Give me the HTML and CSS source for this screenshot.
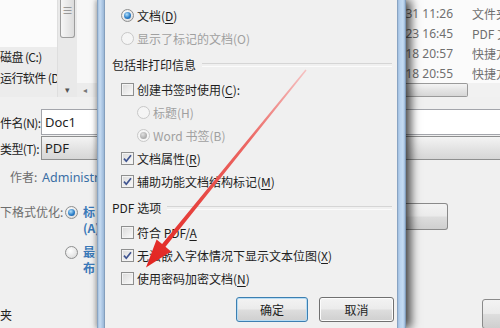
FILE: index.html
```html
<!DOCTYPE html>
<html lang="zh-CN">
<head>
    <meta charset="UTF-8">
    <meta name="viewport" content="width=device-width, initial-scale=1.0">
    <title>选项</title>
    <link rel="stylesheet" href="styles.css">
</head>
<body>
<div class="screen">
    <!-- 另存为 对话框左侧 -->
    <div class="side-left">
        <div class="nav">
            <div class="nav-list">
                <div class="nav-blank"></div>
                <div class="nav-item">磁盘 (C:)</div>
                <div class="nav-item">运行软件 (D</div>
            </div>
            <div class="vscroll">
                <div class="vthumb">≡</div>
                <div class="vtrack"></div>
                <div class="varrow">▾</div>
            </div>
            <div class="nav-edge">
                <div class="nav-edge-top"></div>
                <div class="harrow">◂</div>
            </div>
        </div>
        <div class="field">
            <span class="field-label">件名(N):</span>
            <div class="textbox">Doc1</div>
        </div>
        <div class="field">
            <span class="field-label">类型(T):</span>
            <div class="combo">PDF</div>
        </div>
        <div class="meta">
            <span class="meta-label">作者:</span>
            <span class="meta-value">Administr</span>
        </div>
        <div class="optimize">
            <span class="opt-label">下格式优化:</span>
            <span class="rb checked"></span>
            <span class="opt-text">标<br>(A)</span>
            <span></span>
            <span class="rb"></span>
            <span class="opt-text">最<br>布</span>
        </div>
        <div class="folder">夹</div>
    </div>

    <!-- 选项 对话框 -->
    <div class="dialog">
        <div class="frame frame-left"></div>
        <div class="dialog-body">
            <div class="opt"><span class="rb checked"></span><span>文档(<u>D</u>)</span></div>
            <div class="opt disabled"><span class="rb"></span><span>显示了标记的文档(O)</span></div>
            <div class="group-title"><span>包括非打印信息</span></div>
            <div class="opt"><span class="cb"></span><span>创建书签时使用(<u>C</u>):</span></div>
            <div class="opt sub disabled"><span class="rb"></span><span>标题(H)</span></div>
            <div class="opt sub disabled"><span class="rb dot"></span><span>Word 书签(B)</span></div>
            <div class="opt">
                <span class="cb"><svg viewBox="0 0 11 11"><path d="M2 5.6l2.3 2.6L9 2.2"/></svg></span>
                <span>文档属性(<u>R</u>)</span>
            </div>
            <div class="opt">
                <span class="cb"><svg viewBox="0 0 11 11"><path d="M2 5.6l2.3 2.6L9 2.2"/></svg></span>
                <span>辅助功能文档结构标记(<u>M</u>)</span>
            </div>
            <div class="group-title"><span>PDF 选项</span></div>
            <div class="opt"><span class="cb"></span><span>符合 PDF/<u>A</u></span></div>
            <div class="opt">
                <span class="cb"><svg viewBox="0 0 11 11"><path d="M2 5.6l2.3 2.6L9 2.2"/></svg></span>
                <span>无法嵌入字体情况下显示文本位图(<u>X</u>)</span>
            </div>
            <div class="opt"><span class="cb"></span><span>使用密码加密文档(<u>N</u>)</span></div>
            <div class="buttons">
                <button class="btn default">确定</button>
                <button class="btn">取消</button>
            </div>
        </div>
        <div class="frame frame-right"></div>
    </div>

    <!-- 另存为 对话框右侧 -->
    <div class="side-right">
        <div class="files">
            <div class="file-row"><span class="file-date">31 11:26</span><span class="file-type">文件夹</span></div>
            <div class="file-row"><span class="file-date">23 16:45</span><span class="file-type">PDF 文</span></div>
            <div class="file-row"><span class="file-date">18 20:57</span><span class="file-type">快捷方</span></div>
            <div class="file-row"><span class="file-date">18 20:55</span><span class="file-type">快捷方</span></div>
        </div>
        <div class="hscroll"><div class="hthumb"></div></div>
        <div class="textbox tail"></div>
        <div class="combo tail"></div>
        <div class="btn-stub"></div>
        <div class="btn-stub corner"></div>
    </div>

    <svg class="arrow" viewBox="0 0 500 328" width="500" height="328">
        <defs>
            <linearGradient id="red" x1="306" y1="70" x2="146" y2="267" gradientUnits="userSpaceOnUse">
                <stop offset="0" stop-color="#f5c2c2"/>
                <stop offset="0.35" stop-color="#ec6a66"/>
                <stop offset="1" stop-color="#e2231f"/>
            </linearGradient>
        </defs>
        <polygon fill="url(#red)" points="305.4,69.6 306.6,70.4 165.5,246.8 171,251.4 146,267.5 156.6,239.4 162.1,244"/>
    </svg>
</div>
</body>
</html>
```

FILE: styles.css
```css
* {
    box-sizing: border-box;
}

body {
    margin: 0;
    background-color: #f0f0f0;
    font-family: "Noto Sans CJK SC", "Noto Sans", sans-serif;
    font-size: 12px;
    color: #1e1e1e;
}

.screen {
    position: relative;
    width: 500px;
    height: 328px;
    display: flex;
    overflow: hidden;
    background-color: #f0f0f0;
}

/* 左侧 */
.side-left {
    width: 97px;
    flex: none;
    white-space: nowrap;
}

.nav {
    height: 97px;
    display: flex;
    background-color: #fbfbfb;
}

.nav-list {
    width: 57px;
    overflow: hidden;
}

.nav-blank {
    height: 47px;
}

.nav-item {
    height: 20px;
    line-height: 20px;
    background-color: #ececec;
    color: #222;
    letter-spacing: -0.6px;
}

.nav-item + .nav-item {
    height: 30px;
    line-height: 22px;
}

.vscroll {
    width: 20px;
    display: flex;
    flex-direction: column;
    background-color: #e9e9e9;
    border-left: 1px solid #dedede;
}

.vthumb {
    height: 38px;
    margin: 0 2px;
    padding-top: 3px;
    border: 1px solid #9d9d9d;
    border-top: none;
    border-radius: 0 0 3px 3px;
    background: linear-gradient(90deg, #f6f6f6, #dcdcdc);
    text-align: center;
    font-size: 11px;
    line-height: 14px;
    color: #8a8a8a;
}

.vtrack {
    flex: 1;
}

.varrow {
    height: 14px;
    text-align: center;
    font-size: 9px;
    line-height: 14px;
    color: #555;
}

.nav-edge {
    flex: 1;
    display: flex;
    flex-direction: column;
}

.nav-edge-top {
    flex: 1;
    background-color: #f7f7f7;
}

.harrow {
    height: 14px;
    padding-left: 6px;
    font-size: 8px;
    line-height: 14px;
    color: #777;
    background-color: #ececec;
}

.field {
    display: flex;
    align-items: center;
    margin-top: 12px;
}

.field + .field {
    margin-top: 1px;
}

.field-label {
    width: 41px;
    flex: none;
    color: #222;
    letter-spacing: -0.6px;
}

.textbox {
    flex: 1;
    height: 26px;
    line-height: 24px;
    padding-left: 3px;
    background-color: #fff;
    border: 1px solid #a3a5ab;
    border-right: none;
    font-family: "Noto Sans", sans-serif;
    font-size: 13px;
}

.combo {
    flex: 1;
    height: 24px;
    line-height: 22px;
    padding-left: 3px;
    background: linear-gradient(#f4f4f4, #e4e4e4 50%, #d6d6d6);
    border: 1px solid #8e8f8f;
    border-right: none;
    font-family: "Noto Sans", sans-serif;
    font-size: 13px;
}

.meta {
    margin-top: 7px;
    height: 20px;
    line-height: 20px;
    padding-left: 10px;
    overflow: hidden;
}

.meta-label {
    color: #6d6d6d;
}

.meta-value {
    margin-left: 2px;
    color: #3a6ea5;
    font-family: "Noto Sans", sans-serif;
    font-size: 12.5px;
}

.optimize {
    display: grid;
    grid-template-columns: 65px 18px 14px;
    row-gap: 8px;
    margin-top: 17px;
    line-height: 16px;
    overflow: hidden;
}

.opt-label {
    color: #6d6d6d;
}

.optimize .rb {
    margin-top: 2px;
}

.opt-text {
    color: #3b79b8;
    font-weight: bold;
}

.folder {
    margin-top: 29px;
    line-height: 20px;
    color: #222;
}

/* 对话框 */
.dialog {
    position: relative;
    z-index: 2;
    width: 309px;
    flex: none;
    display: flex;
    box-shadow: 5px 0 9px rgba(0, 0, 0, 0.7), -2px 0 4px rgba(0, 0, 0, 0.2);
}

.frame {
    flex: none;
}

.frame-left {
    width: 8px;
    background: linear-gradient(90deg, #6f88a6 0, #a5c1df 1px, #c6dbf1 3px, #afc9e6 5px, #9ab7d6 7px, #6d86a4 8px);
}

.frame-right {
    width: 9px;
    background: linear-gradient(90deg, #7088a6 0, #a0bedf 1px, #b8d2ee 3px, #c4dbf2 6px, #9bb8d8 8px, #667f9c 9px);
}

.dialog-body {
    flex: 1;
    padding: 4px 0 0 7px;
    background-color: #f0f0f0;
    white-space: nowrap;
}

.opt {
    display: flex;
    align-items: center;
    gap: 3px;
    height: 23px;
    padding-left: 9px;
}

.opt.sub {
    padding-left: 25px;
}

.opt.disabled {
    color: #a0a0a0;
}

.opt u {
    text-underline-offset: 2px;
}

.group-title {
    display: flex;
    align-items: center;
    height: 28px;
}

.group-title::after {
    content: "";
    flex: 1;
    height: 2px;
    margin: 1px 5px 0 6px;
    border-top: 1px solid #d5d5d5;
    border-bottom: 1px solid #fbfbfb;
}

.rb {
    position: relative;
    width: 13px;
    height: 13px;
    flex: none;
    border: 1px solid #8e8f8f;
    border-radius: 50%;
    background: radial-gradient(circle at 40% 35%, #ffffff, #e6e6e6 60%, #cfcfcf);
}

.rb.checked::after,
.rb.dot::after {
    content: "";
    position: absolute;
    inset: 2px;
    border-radius: 50%;
    background: radial-gradient(circle at 40% 35%, #b5e1fb, #2d7fc8 55%, #13559a);
}

.opt.disabled .rb {
    border-color: #c8c8c8;
    background: #f5f5f5;
}

.opt.disabled .rb.dot::after {
    background: radial-gradient(circle at 40% 35%, #e0e0e0, #b0b0b0 60%, #a0a0a0);
}

.cb {
    width: 13px;
    height: 13px;
    flex: none;
    display: flex;
    align-items: center;
    justify-content: center;
    border: 1px solid #8e8f8f;
    background: linear-gradient(135deg, #d9d9d9, #fbfbfb);
    box-shadow: inset 0 0 0 1px #f3f3f3;
}

.cb svg {
    width: 11px;
    height: 11px;
}

.cb path {
    fill: none;
    stroke: #3f5490;
    stroke-width: 1.7;
}

.buttons {
    display: flex;
    justify-content: flex-end;
    gap: 11px;
    margin-top: 7px;
    padding-right: 3px;
}

.btn {
    width: 75px;
    height: 25px;
    padding: 0;
    border: 1px solid #707070;
    border-radius: 3px;
    background: linear-gradient(#f3f3f3, #ebebeb 48%, #dddddd 52%, #cfcfcf);
    box-shadow: inset 0 0 0 1px #fcfcfc;
    font-family: "Noto Sans CJK SC", sans-serif;
    font-size: 12px;
    color: #1e1e1e;
}

.btn.default {
    width: 72px;
    border-color: #3c7fb1;
    box-shadow: inset 0 0 0 1px #b7dcf4;
}

/* 右侧 */
.side-right {
    width: 94px;
    flex: none;
}

.files {
    height: 83px;
    padding-top: 4px;
    background-color: #fbfbfb;
    overflow: hidden;
}

.file-row {
    display: flex;
    height: 20px;
    line-height: 20px;
    white-space: nowrap;
    color: #6f6f6f;
}

.file-date {
    width: 47px;
    flex: none;
    display: flex;
    justify-content: flex-end;
    overflow: hidden;
    font-family: "Noto Sans", sans-serif;
}

.file-type {
    margin-left: 19px;
    overflow: hidden;
}

.hscroll {
    height: 14px;
    background-color: #f1f1f1;
}

.hthumb {
    width: 62px;
    height: 14px;
    border: 1px solid #9a9a9a;
    border-left: none;
    border-radius: 0 2px 2px 0;
    background: linear-gradient(#f4f4f4, #e4e4e4 50%, #d6d6d6);
}

.textbox.tail {
    margin-top: 12px;
    border-left: none;
}

.combo.tail {
    margin-top: 1px;
    border-left: none;
}

.btn-stub {
    width: 42px;
    height: 27px;
    margin-top: 43px;
    border: 1px solid #8a8a8a;
    border-left: none;
    border-radius: 0 3px 3px 0;
    background: linear-gradient(#f3f3f3, #ebebeb 48%, #dddddd 52%, #cfcfcf);
}

.btn-stub.corner {
    width: 20px;
    height: 30px;
    margin: 69px 0 0 76px;
    border-left: 1px solid #8a8a8a;
    border-radius: 3px 0 0 3px;
}

.arrow {
    position: absolute;
    top: 0;
    left: 0;
    z-index: 3;
    pointer-events: none;
}
```
